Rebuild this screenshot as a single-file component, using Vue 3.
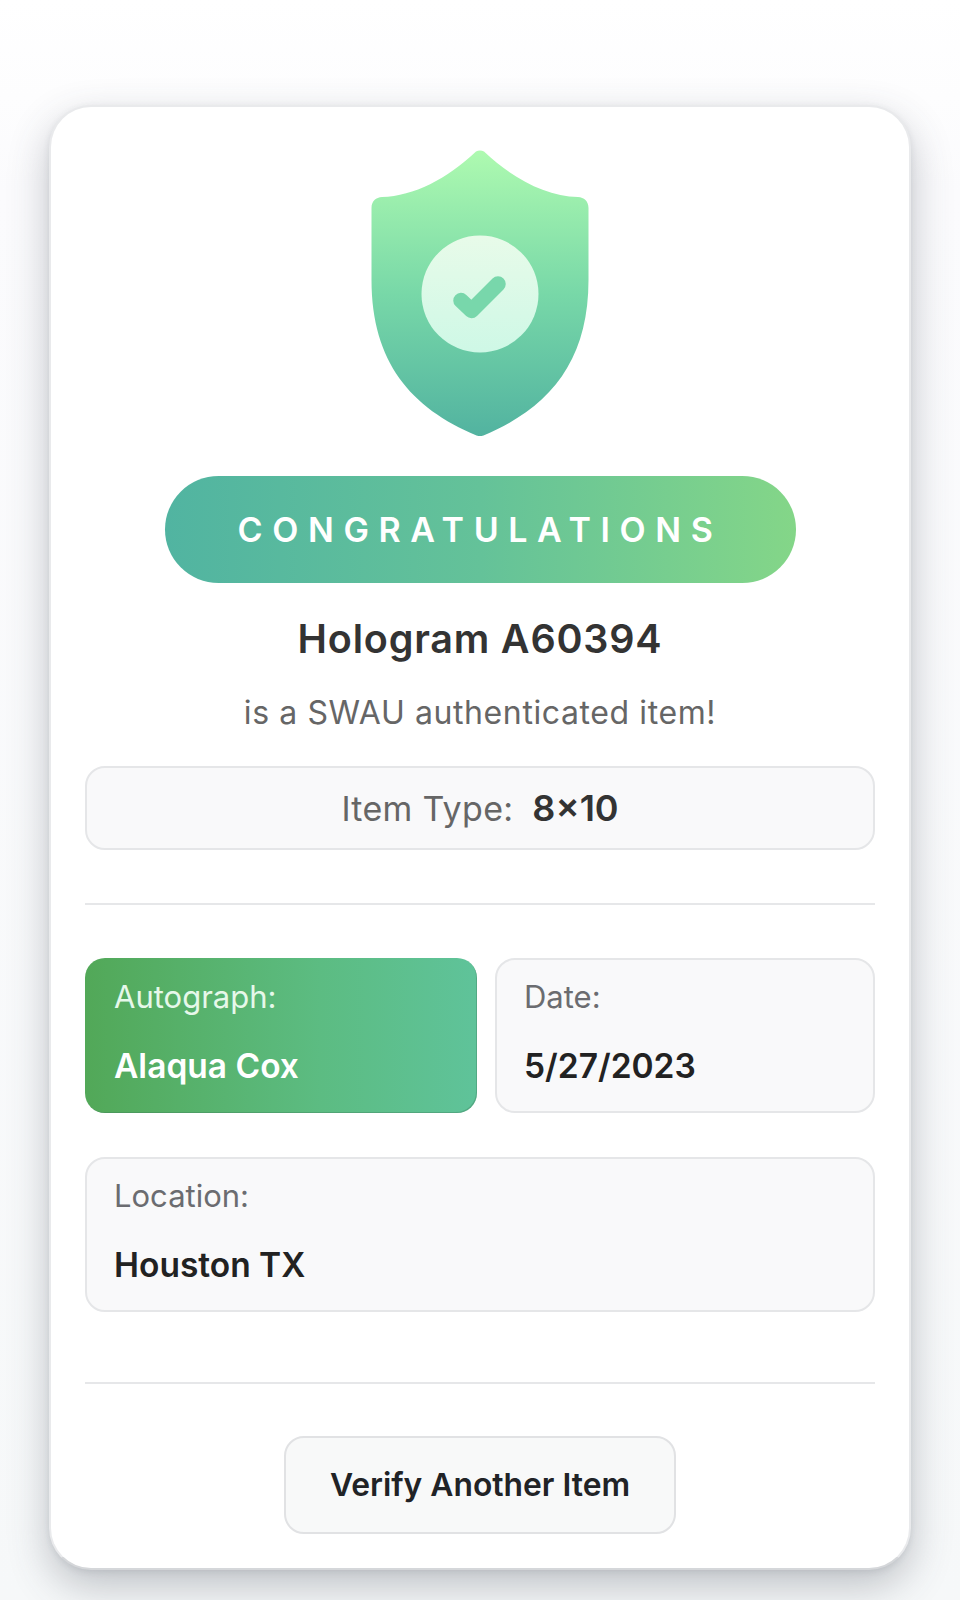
<template>
  <div class="page">
    <div class="card">
      <svg class="shield" viewBox="0 0 218 286" width="218" height="286">
        <defs>
          <linearGradient id="shieldFill" x1="0" y1="0" x2="0" y2="1">
            <stop offset="0" stop-color="#aefab0" />
            <stop offset="0.5" stop-color="#78d8a8" />
            <stop offset="1" stop-color="#52b3a0" />
          </linearGradient>
          <linearGradient id="discFill" x1="0" y1="0" x2="0" y2="1">
            <stop offset="0" stop-color="#e8fbe9" />
            <stop offset="1" stop-color="#cef8e6" />
          </linearGradient>
        </defs>
        <path
          d="M105 1.500C107.500 0 110.500 0 113 1.500C142 29 175 46 207 47C213 47.500 217.500 51 217.500 58V130C217.500 212 178 258 112.500 285.500C110.500 286.300 107.500 286.300 105.500 285.500C40 258 0.500 212 0.500 130V58C0.500 51 5 47.500 11 47C43 46 76 29 105 1.500Z"
          fill="url(#shieldFill)"
        />
        <circle cx="109" cy="144" r="58.500" fill="url(#discFill)" />
        <path
          d="M90 150.500L100.500 160.500L127 134"
          fill="none"
          stroke="#78d7ab"
          stroke-width="15.500"
          stroke-linecap="round"
          stroke-linejoin="round"
        />
      </svg>

      <div class="banner">CONGRATULATIONS</div>
      <h1 class="title">Hologram A60394</h1>
      <p class="subtitle">is a SWAU authenticated item!</p>

      <div class="item-type">
        <span class="item-label">Item Type:</span>
        <span class="item-value">8×10</span>
      </div>

      <hr class="divider first" />

      <div class="info-grid">
        <div class="info-box autograph">
          <div class="info-label">Autograph:</div>
          <div class="info-value">Alaqua Cox</div>
        </div>
        <div class="info-box">
          <div class="info-label">Date:</div>
          <div class="info-value">5/27/2023</div>
        </div>
        <div class="info-box wide">
          <div class="info-label">Location:</div>
          <div class="info-value">Houston TX</div>
        </div>
      </div>

      <hr class="divider second" />

      <button class="verify-btn" type="button">Verify Another Item</button>
    </div>
  </div>
</template>

<script setup>
</script>

<style>
html, body { margin: 0; background: #f6f8f9; }
</style>

<style scoped>
.page {
  height: 1600px;
  box-sizing: border-box;
  padding: 105px 49px 0;
  overflow: hidden;
  background: linear-gradient(180deg, #ffffff 0%, #fbfbfd 12%, #f6f8f9 100%);
  font-family: Inter, "Liberation Sans", sans-serif;
}
.card {
  width: 862px;
  height: 1465px;
  box-sizing: border-box;
  padding: 43px 34px 0;
  display: flex;
  flex-direction: column;
  align-items: center;
  background: #fff;
  border: 2px solid #e9eaec;
  border-bottom-color: #d5d7da;
  border-radius: 42px;
  box-shadow: 0 16px 40px rgba(60, 66, 80, 0.3), 0 2px 6px rgba(60, 66, 80, 0.1);
}
.shield { display: block; flex: none; }
.banner {
  width: 631px;
  height: 107px;
  margin-top: 40px;
  display: flex;
  align-items: center;
  justify-content: center;
  flex: none;
  border-radius: 54px;
  background: linear-gradient(90deg, #51b4a1 0%, #64c299 50%, #84d688 100%);
  color: #fff;
  font-size: 34px;
  font-weight: 600;
  letter-spacing: 9.6px;
}
.title {
  margin: 31px 0 0;
  color: #333;
  font-size: 39.500px;
  line-height: 50px;
  font-weight: 600;
  letter-spacing: 0.8px;
}
.subtitle {
  margin: 27px 0 0;
  color: #666;
  font-size: 32px;
  line-height: 44px;
  font-weight: 400;
  letter-spacing: 0.6px;
}
.item-type {
  width: 100%;
  height: 84px;
  margin-top: 31px;
  box-sizing: border-box;
  display: flex;
  align-items: center;
  justify-content: center;
  gap: 19px;
  flex: none;
  background: #f9f9fa;
  border: 2px solid #e5e6e8;
  border-radius: 20px;
}
.item-label { color: #666; font-size: 34px; letter-spacing: 0.3px; }
.item-value { color: #333; font-size: 36px; font-weight: 600; }
.divider {
  width: 100%;
  margin: 0;
  border: 0;
  border-top: 2px solid #e6e7e9;
  flex: none;
}
.first { margin-top: 53px; }
.second { margin-top: 70px; }
.info-grid {
  width: 100%;
  margin-top: 53px;
  display: grid;
  grid-template-columns: 392px 380px;
  gap: 44px 18px;
}
.info-box {
  height: 155px;
  box-sizing: border-box;
  padding: 19px 27px 0;
  background: #f9f9fa;
  border: 2px solid #e5e6e8;
  border-radius: 20px;
}
.wide { grid-column: span 2; }
.autograph {
  padding: 21px 29px 0;
  background: linear-gradient(90deg, #52a858 0%, #5cbc82 60%, #5fc39a 100%);
  border: 0;
  box-shadow: inset -1px -1px 0 rgba(60, 120, 90, 0.35);
}
.info-label {
  color: #6b6c70;
  font-size: 31px;
  line-height: 36px;
}
.info-value {
  margin-top: 31px;
  color: #222;
  font-size: 33.500px;
  line-height: 40px;
  font-weight: 600;
}
.autograph .info-label { color: #e6f8ea; }
.autograph .info-value { color: #fff; }
.verify-btn {
  width: 392px;
  height: 98px;
  margin-top: 52px;
  padding: 0 0 2px;
  flex: none;
  background: #f8f9f9;
  border: 2px solid #e1e2e4;
  border-radius: 20px;
  color: #212326;
  font-family: inherit;
  font-size: 31.800px;
  font-weight: 600;
}
</style>
